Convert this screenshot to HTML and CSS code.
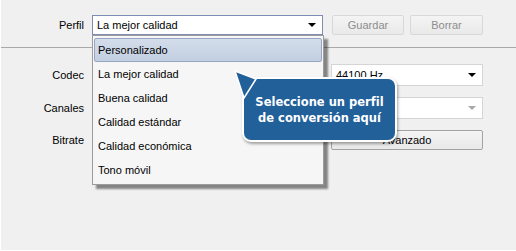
FILE: index.html
```html
<!DOCTYPE html>
<html lang="es">
<head>
    <meta charset="UTF-8">
    <meta name="viewport" content="width=device-width, initial-scale=1.0">
    <title>Perfil de conversión</title>
    <link rel="stylesheet" href="styles.css">
</head>
<body>
    <div class="window">
        <div class="profile-row">
            <label class="field-label">Perfil</label>
            <div class="combo combo-focus profile-combo">
                <span>La mejor calidad</span>
                <span class="arrow"></span>
            </div>
            <button class="btn btn-disabled">Guardar</button>
            <button class="btn btn-disabled">Borrar</button>
        </div>
        <div class="separator"></div>
        <div class="settings">
            <label class="field-label">Codec</label>
            <div class="combo">
                <span>44100 Hz</span>
                <span class="arrow"></span>
            </div>
            <label class="field-label">Canales</label>
            <div class="combo combo-disabled">
                <span></span>
                <span class="arrow"></span>
            </div>
            <label class="field-label">Bitrate</label>
            <button class="btn wide-btn">Avanzado</button>
        </div>

        <ul class="dropdown">
            <li class="selected">Personalizado</li>
            <li>La mejor calidad</li>
            <li>Buena calidad</li>
            <li>Calidad estándar</li>
            <li>Calidad económica</li>
            <li>Tono móvil</li>
        </ul>

        <div class="callout">
            <svg class="callout-tail" width="24" height="30" viewBox="0 0 24 30">
                <polygon points="1,1 22,9 10,28" fill="#22609a" stroke="#ffffff" stroke-width="1.5"/>
            </svg>
            <div class="callout-box">Seleccione un perfil<br>de conversión aquí</div>
        </div>
    </div>
</body>
</html>
```

FILE: styles.css
```css
body {
    margin: 0;
    background-color: #ffffff;
    font-family: Tahoma, "Liberation Sans", sans-serif;
    font-size: 11px;
    color: #000000;
}
.window {
    position: relative;
    width: 515px;
    height: 250px;
    margin-left: 1px;
    background-color: #f0f0f0;
    overflow: hidden;
}
.profile-row {
    display: flex;
    align-items: center;
    padding-top: 15px;
    height: 20px;
}
.field-label {
    width: 83px;
    text-align: right;
}
.profile-row .field-label {
    margin-right: 8px;
}
.combo {
    display: flex;
    align-items: center;
    justify-content: space-between;
    box-sizing: border-box;
    height: 22px;
    padding: 0 6px 0 4px;
    background-color: #ffffff;
    border: 1px solid #d5d5d5;
}
.profile-combo {
    width: 231px;
    height: 20px;
}
.combo-focus {
    border-color: #7f8db4;
}
.arrow {
    width: 0;
    height: 0;
    border-left: 4px solid transparent;
    border-right: 4px solid transparent;
    border-top: 4px solid #000000;
}
.combo-disabled .arrow {
    border-top-color: #a8a8a8;
}
.btn {
    box-sizing: border-box;
    height: 20px;
    font-family: inherit;
    font-size: 11px;
    border: 1px solid #d8d8d8;
    border-radius: 2px;
    background: linear-gradient(#f4f4f4, #e9e9e9);
    color: #000000;
    padding: 0;
}
.btn-disabled {
    color: #8d8d8d;
}
.profile-row .btn:nth-of-type(1) {
    width: 72px;
    margin-left: 9px;
}
.profile-row .btn:nth-of-type(2) {
    width: 73px;
    margin-left: 6px;
}
.separator {
    margin-top: 12px;
    border-top: 1px solid #a9a9a9;
}
.settings {
    display: grid;
    grid-template-columns: 83px 152px;
    column-gap: 247px;
    row-gap: 11px;
    align-items: center;
    margin-top: 16px;
}
.wide-btn {
    height: 20px;
    border-color: #a3a3a3;
}
.dropdown {
    position: absolute;
    left: 91px;
    top: 35px;
    width: 228px;
    margin: 0;
    padding: 2px 1px;
    list-style: none;
    background-color: #f6f6f6;
    border: 1px solid #9c9c9c;
    box-shadow: 4px 4px 2px rgba(0, 0, 0, 0.45);
}
.dropdown li {
    height: 24px;
    line-height: 22px;
    padding-left: 3px;
    border: 1px solid transparent;
    box-sizing: border-box;
}
.dropdown .selected {
    background: linear-gradient(#d3ddeb, #c3cfe1);
    border-color: #97a6c2;
    border-radius: 2px;
}
.callout {
    position: absolute;
    left: 232px;
    top: 69px;
}
.callout-tail {
    position: absolute;
    left: 1px;
    top: 1px;
    z-index: 2;
}
.callout-box {
    position: relative;
    margin-left: 9px;
    margin-top: 8px;
    width: 151px;
    height: 61px;
    box-sizing: content-box;
    background-color: #22609a;
    border: 2px solid #ffffff;
    border-radius: 9px;
    box-shadow: 1px 2px 3px rgba(0, 0, 0, 0.35);
    color: #ffffff;
    font-family: "DejaVu Sans", sans-serif;
    font-weight: bold;
    font-size: 11.5px;
    line-height: 16px;
    text-align: center;
    display: flex;
    align-items: center;
    justify-content: center;
}
```
